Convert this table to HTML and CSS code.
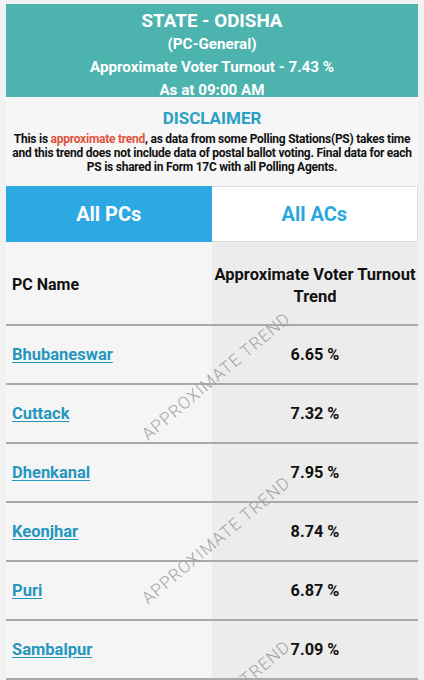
FILE: index.html
```html
<!DOCTYPE html>
<html>
<head>
<meta charset="utf-8">
<link rel="stylesheet" href="styles.css">
</head>
<body>
<div class="page">
  <header class="banner">
    <div class="state">STATE - ODISHA</div>
    <div class="line">(PC-General)</div>
    <div class="line">Approximate Voter Turnout - 7.43 %</div>
    <div class="line">As at 09:00 AM</div>
  </header>
  <section class="disclaimer">
    <h2 class="disc-title">DISCLAIMER</h2>
    <p class="disc-text">This is <span class="hl">approximate trend</span>, as data from some Polling Stations(PS) takes time and this trend does not include data of postal ballot voting. Final data for each PS is shared in Form 17C with all Polling Agents.</p>
  </section>
  <nav class="tabs">
    <div class="tab active">All PCs</div>
    <div class="tab">All ACs</div>
  </nav>
  <div class="table-wrap">
    <div class="row head">
      <div class="c-name">PC Name</div>
      <div class="c-val">Approximate Voter Turnout Trend</div>
    </div>
    <div class="row"><div class="c-name"><a href="#">Bhubaneswar</a></div><div class="c-val">6.65 %</div></div>
    <div class="row"><div class="c-name"><a href="#">Cuttack</a></div><div class="c-val">7.32 %</div></div>
    <div class="row"><div class="c-name"><a href="#">Dhenkanal</a></div><div class="c-val">7.95 %</div></div>
    <div class="row"><div class="c-name"><a href="#">Keonjhar</a></div><div class="c-val">8.74 %</div></div>
    <div class="row"><div class="c-name"><a href="#">Puri</a></div><div class="c-val">6.87 %</div></div>
    <div class="row"><div class="c-name"><a href="#">Sambalpur</a></div><div class="c-val">7.09 %</div></div>
    <div class="wm wm1">APPROXIMATE TREND</div>
    <div class="wm wm2">APPROXIMATE TREND</div>
    <div class="wm wm3">APPROXIMATE TREND</div>
  </div>
</div>
</body>
</html>
```
FILE: styles.css
```css
* { box-sizing: border-box; }
html, body { margin: 0; padding: 0; }
body {
  background: #f1f1f1;
  font-family: Roboto, "Liberation Sans", Arial, sans-serif;
  color: #111;
}
.page {
  margin: 4px 6px 0 6px;
}
.banner {
  background: #4db3ae;
  color: #fff;
  text-align: center;
  padding: 6px 0 4px;
  height: 93px;
}
.state {
  font-size: 18.8px;
  font-weight: 700;
  line-height: 23px;
}
.line {
  font-size: 15.2px;
  font-weight: 700;
  line-height: 23px;
}
.disclaimer {
  background: #f6f6f6;
  text-align: center;
  padding: 10px 0 0;
  height: 89px;
}
.disc-title {
  margin: 0;
  font-size: 17px;
  font-weight: 700;
  color: #2aa0c4;
  line-height: 22px;
}
.disc-text {
  margin: 3px 0 0;
  font-size: 12px;
  letter-spacing: -0.25px;
  font-weight: 700;
  line-height: 14px;
  color: #111;
}
.hl { color: #e0533c; }
.tabs {
  display: flex;
  height: 56px;
}
.tab {
  flex: 1;
  display: flex;
  align-items: center;
  justify-content: center;
  font-size: 20px;
  font-weight: 700;
  color: #2aa7dc;
  background: #fff;
  border: 1px solid #dcdcdc;
  border-left: none;
}
.tab.active {
  background: #2ea8e2;
  color: #fff;
  border: none;
}
.table-wrap {
  position: relative;
  overflow: hidden;
  background: linear-gradient(to right, #f5f5f5 0, #f5f5f5 50%, #ececec 50%, #ececec 100%);
}
.row {
  display: grid;
  grid-template-columns: 206px 206px;
  height: 59px;
  align-items: center;
  border-bottom: 2px solid #a9a9a9;
}
.row.head {
  height: 84px;
}
.c-name {
  padding-left: 6px;
  font-size: 16.5px;
  font-weight: 700;
}
.head .c-name {
  font-size: 16px;
  padding-top: 2px;
}
.c-name a {
  color: #2596be;
  text-decoration: underline;
  text-underline-offset: 2px;
}
.c-val {
  text-align: center;
  font-size: 16.3px;
  font-weight: 700;
}
.head .c-val {
  font-size: 16.5px;
  line-height: 22px;
  padding-top: 6px;
}
.wm {
  position: absolute;
  left: 98px;
  width: 224px;
  text-align: center;
  font-size: 17px;
  font-weight: 300;
  letter-spacing: 1px;
  color: #a4a4a4;
  transform: rotate(-40deg);
  white-space: nowrap;
  pointer-events: none;
}
.wm1 { top: 124px; }
.wm2 { top: 288px; }
.wm3 { top: 452px; }
```
